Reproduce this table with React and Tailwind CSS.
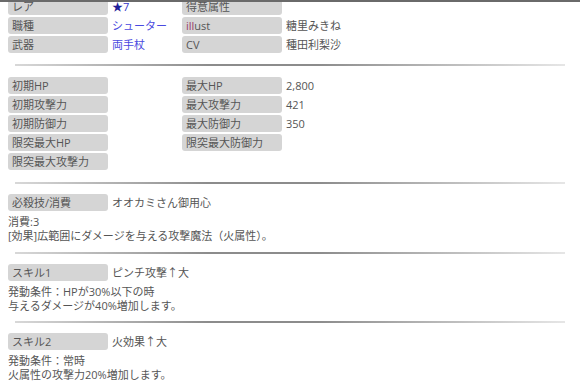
import React from 'react';

const Label = ({ children }) => (
  <div className="h-[17px] rounded-[3px] bg-[#d5d5d5] pl-1 leading-[17px] text-[#555]">{children}</div>
);

const Value = ({ children, className = 'text-[#555]' }) => (
  <div className={`h-[17px] leading-[17px] ${className}`}>{children}</div>
);

const Divider = ({ className = '' }) => (
  <div
    className={`mx-[15px] h-[2px] bg-[linear-gradient(to_right,#d8d8d8,#8c8c8c_35%,#8c8c8c_55%,#e6e6e6)] ${className}`}
  />
);

const grid = 'grid grid-cols-[100px_66px_100px_1fr] gap-x-1 gap-y-[2px] px-2';

const profile = [
  ['レア', <span className="text-[#3535c8]"><span className="text-[#1f1f9a]">★</span>7</span>, '得意属性', ''],
  ['職種', <span className="text-[#4a4ae0]">シューター</span>, <span><span className="text-[#9a3d6a]">ill</span>ust</span>, '糖里みきね'],
  ['武器', <span className="text-[#4a4ae0]">両手杖</span>, 'CV', '種田利梨沙'],
];

const stats = [
  ['初期HP', '', '最大HP', '2,800'],
  ['初期攻撃力', '', '最大攻撃力', '421'],
  ['初期防御力', '', '最大防御力', '350'],
  ['限突最大HP', '', '限突最大防御力', ''],
  ['限突最大攻撃力', '', null, null],
];

const skills = [
  {
    label: '必殺技/消費',
    name: 'オオカミさん御用心',
    lines: ['消費:3', '[効果]広範囲にダメージを与える攻撃魔法（火属性）。'],
  },
  {
    label: 'スキル1',
    name: 'ピンチ攻撃↑大',
    lines: ['発動条件：HPが30%以下の時', '与えるダメージが40%増加します。'],
  },
  {
    label: 'スキル2',
    name: '火効果↑大',
    lines: ['発動条件：常時', '火属性の攻撃力20%増加します。'],
  },
];

function Rows({ rows }) {
  return rows.map((r, i) => (
    <React.Fragment key={i}>
      <Label>{r[0]}</Label>
      <Value>{r[1]}</Value>
      {r[2] !== null ? <Label>{r[2]}</Label> : <div />}
      {r[3] !== null ? <Value>{r[3]}</Value> : <div />}
    </React.Fragment>
  ));
}

export default function App() {
  return (
    <div
      className="relative h-[381px] w-[580px] overflow-hidden bg-white text-[11px] text-[#555]"
      style={{ fontFamily: '"Open Sans", "Noto Sans CJK JP", sans-serif' }}
    >
      <div className="fixed inset-x-0 top-0 z-10 h-[2px] bg-[#6a6a6a]" />

      <div className={`${grid} -mt-[2px]`}>
        <Rows rows={profile} />
      </div>

      <Divider className="mt-[11px]" />

      <div className={`${grid} mt-[11px]`}>
        <Rows rows={stats} />
      </div>

      {skills.map((s, i) => (
        <div key={s.label}>
          <Divider className={i === 0 ? 'mt-[12px]' : i === 1 ? 'mt-[9px]' : 'mt-[8px]'} />
          <div className="mt-[10px] flex gap-1 px-2">
            <div className="w-[100px]">
              <Label>{s.label}</Label>
            </div>
            <Value>{s.name}</Value>
          </div>
          <div className="mt-[4px] px-2 leading-[14px]">
            {s.lines.map((l) => (
              <div key={l}>{l}</div>
            ))}
          </div>
        </div>
      ))}
    </div>
  );
}
